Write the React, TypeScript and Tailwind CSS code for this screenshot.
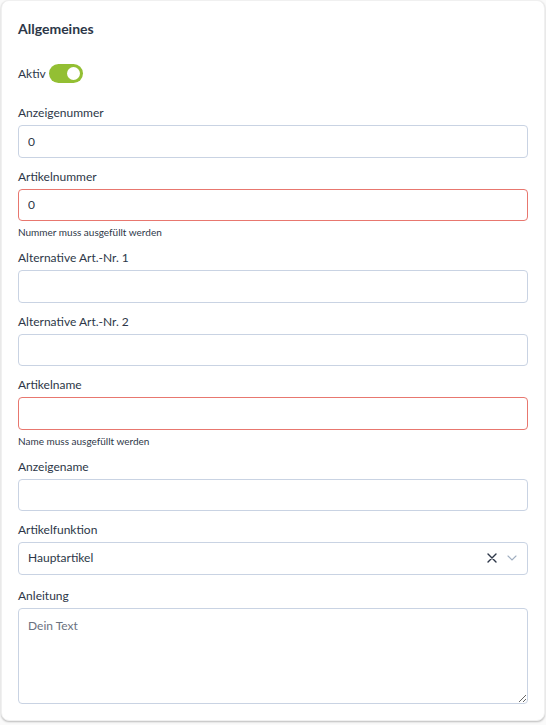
import React from 'react';

const Label = ({ children }: { children: React.ReactNode }) => (
  <label className="block text-[12px] leading-[16px] text-[#2d3748] mb-1">{children}</label>
);

const Field = ({ label, value, error }: { label: string; value?: string; error?: string }) => (
  <div>
    <Label>{label}</Label>
    <input
      readOnly
      value={value ?? ''}
      className={`block w-full h-[32.5px] px-[9px] rounded-[4px] border bg-white text-[12px] text-[#2d3748] outline-none ${
        error ? 'border-[#e8776f]' : 'border-[#c9d3e3]'
      }`}
    />
    {error && <div className="mt-1 text-[10px] leading-[14px] text-[#2d3748]">{error}</div>}
  </div>
);

export default function App() {
  return (
    <div className="min-h-screen bg-[#fafafa]" style={{ fontFamily: 'Lato, "Open Sans", sans-serif' }}>
      <div className="ml-px w-[544px] bg-white rounded-lg border border-[#f0f0f0] shadow-[0_1px_2px_rgba(0,0,0,0.25)] px-[16px] pt-[18px] pb-[16px]">
        <h2 className="text-[14px] leading-[20px] font-bold text-[#2d3748]">Allgemeines</h2>

        <div className="mt-[25px] mb-[22px] flex items-center gap-[3px]">
          <span className="text-[12px] leading-[16px] text-[#2d3748]">Aktiv</span>
          <div className="w-[34px] h-[19px] rounded-full bg-[#93bf33] flex items-center justify-end pr-[3px]">
            <div className="w-[13px] h-[13px] rounded-full bg-white" />
          </div>
        </div>

        <div className="flex flex-col gap-[11px]">
          <Field label="Anzeigenummer" value="0" />
          <Field label="Artikelnummer" value="0" error="Nummer muss ausgefüllt werden" />
          <Field label="Alternative Art.-Nr. 1" />
          <Field label="Alternative Art.-Nr. 2" />
          <Field label="Artikelname" error="Name muss ausgefüllt werden" />
          <Field label="Anzeigename" />
          <div>
            <Label>Artikelfunktion</Label>
            <div className="h-[32.5px] rounded-[4px] border border-[#c9d3e3] flex items-center pl-[9px] pr-[10px]">
              <span className="flex-1 text-[12px] text-[#2d3748]">Hauptartikel</span>
              <svg width="10" height="10" viewBox="0 0 10 10" className="mr-[10px]">
                <path d="M1 1L9 9M9 1L1 9" stroke="#2d3748" strokeWidth="1.4" strokeLinecap="round" />
              </svg>
              <svg width="10" height="6" viewBox="0 0 10 6">
                <path d="M1 1L5 5L9 1" stroke="#a0aec0" strokeWidth="1.1" fill="none" strokeLinecap="round" />
              </svg>
            </div>
          </div>
          <div className="mt-[2px]">
            <Label>Anleitung</Label>
            <textarea
              placeholder="Dein Text"
              className="block w-full h-[96px] px-[9px] py-[8px] rounded-[4px] border border-[#c9d3e3] text-[12px] text-[#2d3748] placeholder:text-[#6b7280] outline-none"
            />
          </div>
        </div>
      </div>
    </div>
  );
}
